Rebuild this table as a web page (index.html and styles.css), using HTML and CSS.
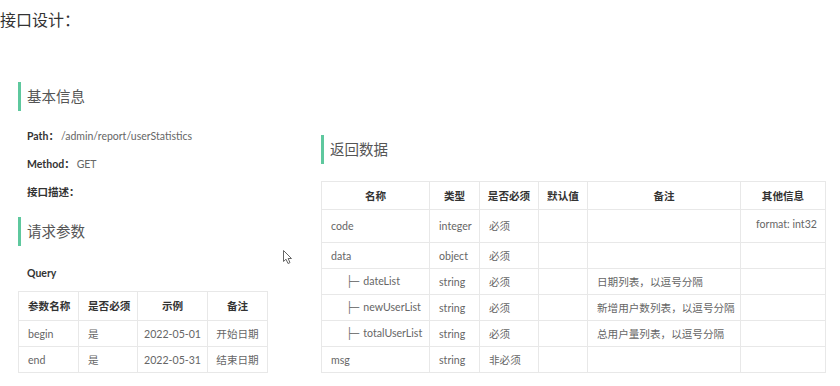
FILE: index.html
```html
<!DOCTYPE html>
<html lang="zh-CN">
<head>
<meta charset="utf-8">
<title>接口设计</title>
<link rel="stylesheet" href="styles.css">
</head>
<body>
<h1 class="title">接口设计：</h1>
<div class="cols">
  <div class="left">
    <h2 class="sec">基本信息</h2>
    <div class="info"><b>Path：</b><span>/admin/report/userStatistics</span></div>
    <div class="info"><b>Method：</b><span>GET</span></div>
    <div class="info"><b>接口描述：</b></div>
    <h2 class="sec sec2">请求参数</h2>
    <div class="info query"><b>Query</b></div>
    <table class="tbl ltbl">
      <colgroup><col class="l1"><col class="l2"><col class="l3"><col class="l4"></colgroup>
      <tr class="hrow"><th>参数名称</th><th>是否必须</th><th class="ctr">示例</th><th class="ctr">备注</th></tr>
      <tr><td>begin</td><td>是</td><td class="ctr">2022-05-01</td><td class="ctr">开始日期</td></tr>
      <tr><td>end</td><td>是</td><td class="ctr">2022-05-31</td><td class="ctr">结束日期</td></tr>
    </table>
  </div>
  <div class="right">
    <h2 class="sec">返回数据</h2>
    <table class="tbl rtbl">
      <colgroup><col class="r1"><col class="r2"><col class="r3"><col class="r4"><col class="r5"><col class="r6"></colgroup>
      <tr class="hrow"><th>名称</th><th>类型</th><th>是否必须</th><th>默认值</th><th>备注</th><th>其他信息</th></tr>
      <tr class="tall"><td>code</td><td>integer</td><td>必须</td><td></td><td></td><td class="fmt">format: int32</td></tr>
      <tr><td>data</td><td>object</td><td>必须</td><td></td><td></td><td></td></tr>
      <tr><td class="sub"><span class="tree">├─</span>dateList</td><td>string</td><td>必须</td><td></td><td>日期列表，以逗号分隔</td><td></td></tr>
      <tr><td class="sub"><span class="tree">├─</span>newUserList</td><td>string</td><td>必须</td><td></td><td>新增用户数列表，以逗号分隔</td><td></td></tr>
      <tr><td class="sub"><span class="tree">├─</span>totalUserList</td><td>string</td><td>必须</td><td></td><td>总用户量列表，以逗号分隔</td><td></td></tr>
      <tr><td>msg</td><td>string</td><td>非必须</td><td></td><td></td><td></td></tr>
    </table>
  </div>
</div>
<svg class="cursor" width="12" height="16" viewBox="0 0 12 16" aria-hidden="true">
  <path d="M1.5 1.5 L1.5 12.5 L4 10.2 L6 14.5 L8 13.6 L6.1 9.5 L9.5 9.5 Z" fill="#fff" stroke="#666" stroke-width="1" stroke-linejoin="round"/>
</svg>
</body>
</html>
```

FILE: styles.css
```css
html, body {
  margin: 0;
  padding: 0;
  background: #fff;
}
body {
  font-family: "Lato", "Noto Sans CJK SC", sans-serif;
  color: #666;
  width: 840px;
  height: 386px;
  overflow: hidden;
  position: relative;
}
.title {
  margin: 0;
  padding-top: 7px;
  font-size: 16px;
  line-height: 26px;
  font-weight: normal;
  color: #333;
}
.cols {
  display: flex;
  align-items: flex-start;
  padding-left: 18px;
  gap: 53px;
}
.left {
  width: 250px;
  margin-top: 49px;
}
.right {
  width: 504px;
  margin-top: 102px;
}
.sec {
  margin: 0;
  height: 29px;
  line-height: 29px;
  border-left: 3px solid #5ec89e;
  padding-left: 6px;
  font-size: 14.5px;
  font-weight: normal;
  color: #555;
}
.left .sec { margin-bottom: 11px; }
.sec2 { margin-top: 11px; }
.right .sec { margin-bottom: 17px; }
.info {
  padding-left: 9px;
  font-size: 10.5px;
  line-height: 28px;
  color: #666;
}
.info b {
  color: #333;
  font-weight: bold;
}
.info span { margin-left: 2px; }
.query { margin-top: 13px; margin-bottom: 4px; }
.tbl {
  border-collapse: collapse;
  table-layout: fixed;
  font-size: 10.6px;
  color: #666;
}
.tbl th, .tbl td {
  box-sizing: border-box;
  border: 1px solid #e8e8e8;
  padding: 0 9px;
  height: 26px;
  text-align: left;
  white-space: nowrap;
  overflow: hidden;
  vertical-align: middle;
  line-height: 16px;
}
.tbl th {
  color: #333;
  font-weight: bold;
}
.ltbl { width: 249px; }
.ltbl .hrow th { height: 29px; }
.l1 { width: 60px; }
.l2 { width: 59px; }
.l3 { width: 70px; }
.l4 { width: 60px; }
.ltbl .ctr { text-align: center; padding: 0; }
.rtbl { width: 504px; }
.rtbl th { text-align: center; height: 28px; padding: 0; }
.r1 { width: 108px; }
.r2 { width: 50px; }
.r3 { width: 59px; }
.r4 { width: 49px; }
.r5 { width: 153px; }
.r6 { width: 85px; }
.rtbl .tall td { height: 33px; }
.rtbl .tall .fmt {
  vertical-align: top;
  padding-top: 6px;
  padding-left: 15px;
}
.rtbl .sub { padding-left: 24px; }
.tree {
  font-family: "DejaVu Sans", sans-serif;
  font-size: 11px;
  color: #777;
  margin-right: 4px;
}
.cursor {
  position: absolute;
  left: 282px;
  top: 249px;
}
```
